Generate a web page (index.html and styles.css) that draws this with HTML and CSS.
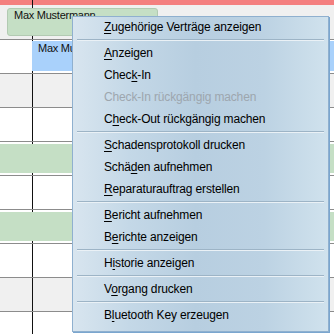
FILE: index.html
```html
<!DOCTYPE html>
<html lang="de">
  <head>
    <meta charset="UTF-8" />
    <title>Planung</title>
    <link rel="stylesheet" href="styles.css">
  </head>
  <body>
    <div class="planner">
      <div class="row row-head"><div class="lead"></div></div>
      <div class="row row-grey row-first">
        <div class="lead"></div>
        <div class="event event-green event-a">Max Mustermann</div>
      </div>
      <div class="row">
        <div class="lead"></div>
        <div class="event event-blue event-b">Max Mustermann</div>
      </div>
      <div class="row row-grey"><div class="lead"></div></div>
      <div class="row"><div class="lead"></div></div>
      <div class="row">
        <div class="lead"></div>
        <div class="band"></div>
      </div>
      <div class="row"><div class="lead"></div></div>
      <div class="row">
        <div class="lead"></div>
        <div class="band"></div>
      </div>
      <div class="row"><div class="lead"></div></div>
      <div class="row row-grey"><div class="lead"></div></div>
      <div class="row"><div class="lead"></div></div>
    </div>

    <div class="context-menu">
      <div class="item"><u>Z</u>ugehörige Verträge anzeigen</div>
      <div class="sep"></div>
      <div class="item"><u>A</u>nzeigen</div>
      <div class="item">Chec<u>k</u>-In</div>
      <div class="item disabled">Check-In rückgängig machen</div>
      <div class="item">C<u>h</u>eck-Out rückgängig machen</div>
      <div class="sep"></div>
      <div class="item"><u>S</u>chadensprotokoll drucken</div>
      <div class="item">Schä<u>d</u>en aufnehmen</div>
      <div class="item"><u>R</u>eparaturauftrag erstellen</div>
      <div class="sep"></div>
      <div class="item"><u>B</u>ericht aufnehmen</div>
      <div class="item">B<u>e</u>richte anzeigen</div>
      <div class="sep"></div>
      <div class="item">H<u>i</u>storie anzeigen</div>
      <div class="sep"></div>
      <div class="item">V<u>o</u>rgang drucken</div>
      <div class="sep"></div>
      <div class="item">B<u>l</u>uetooth Key erzeugen</div>
    </div>
  </body>
</html>
```

FILE: styles.css
```css
body {
  margin: 0;
  width: 334px;
  height: 334px;
  overflow: hidden;
  background: #fff;
  font-family: "Liberation Sans", Arial, sans-serif;
  color: #000;
  position: relative;
}
.planner {
  display: flex;
  flex-direction: column;
}
.row {
  position: relative;
  display: flex;
  height: 33px;
  border-bottom: 1px solid #8c8c8c;
  background: #fff;
}
.row-grey {
  background: #f0f0f0;
}
.row-first {
  height: 34px;
}
.row-head {
  height: 5px;
  border-bottom: none;
  background: #f47f7f;
}
.lead {
  width: 32px;
  border-right: 1px solid #111;
}
.event {
  position: absolute;
  box-sizing: border-box;
  padding: 0 6px;
  font-size: 11px;
  line-height: 12px;
  letter-spacing: -0.25px;
  white-space: nowrap;
  overflow: hidden;
  color: #111;
}
.event-green {
  background: #c5dfc5;
  border: 1px solid #b2cab2;
  border-radius: 3px;
}
.event-blue {
  background: #a9d1fb;
  padding-top: 1px;
}
.event-a {
  left: 7px;
  top: 3px;
  width: 151px;
  height: 28px;
}
.event-b {
  left: 32px;
  top: 1px;
  right: 0;
  height: 30px;
}
.band {
  position: absolute;
  left: 0;
  right: 0;
  top: 2px;
  height: 29px;
  background: #c5dfc5;
}
.context-menu {
  position: absolute;
  left: 72px;
  top: 16px;
  width: 257px;
  box-sizing: border-box;
  padding: 0 0 4px;
  border: 1px solid #8fb0cf;
  background: linear-gradient(90deg, #d8e5ef 0%, #c4d8e7 22%, #b7cee0 48%, #bcd2e3 75%, #d0e2ed 100%);
  box-shadow: 1px 1px 0 #7aa6cf;
  z-index: 10;
}
.item {
  height: 22px;
  line-height: 21px;
  padding-left: 31px;
  font-size: 12px;
  letter-spacing: -0.15px;
  white-space: nowrap;
}
.item u {
  text-underline-offset: 2px;
}
.item.disabled {
  color: #9da6ae;
}
.sep {
  margin: 0 4px 2px 4px;
  border-top: 1px solid #9db4c6;
  border-bottom: 1px solid #eaf1f6;
}
```
